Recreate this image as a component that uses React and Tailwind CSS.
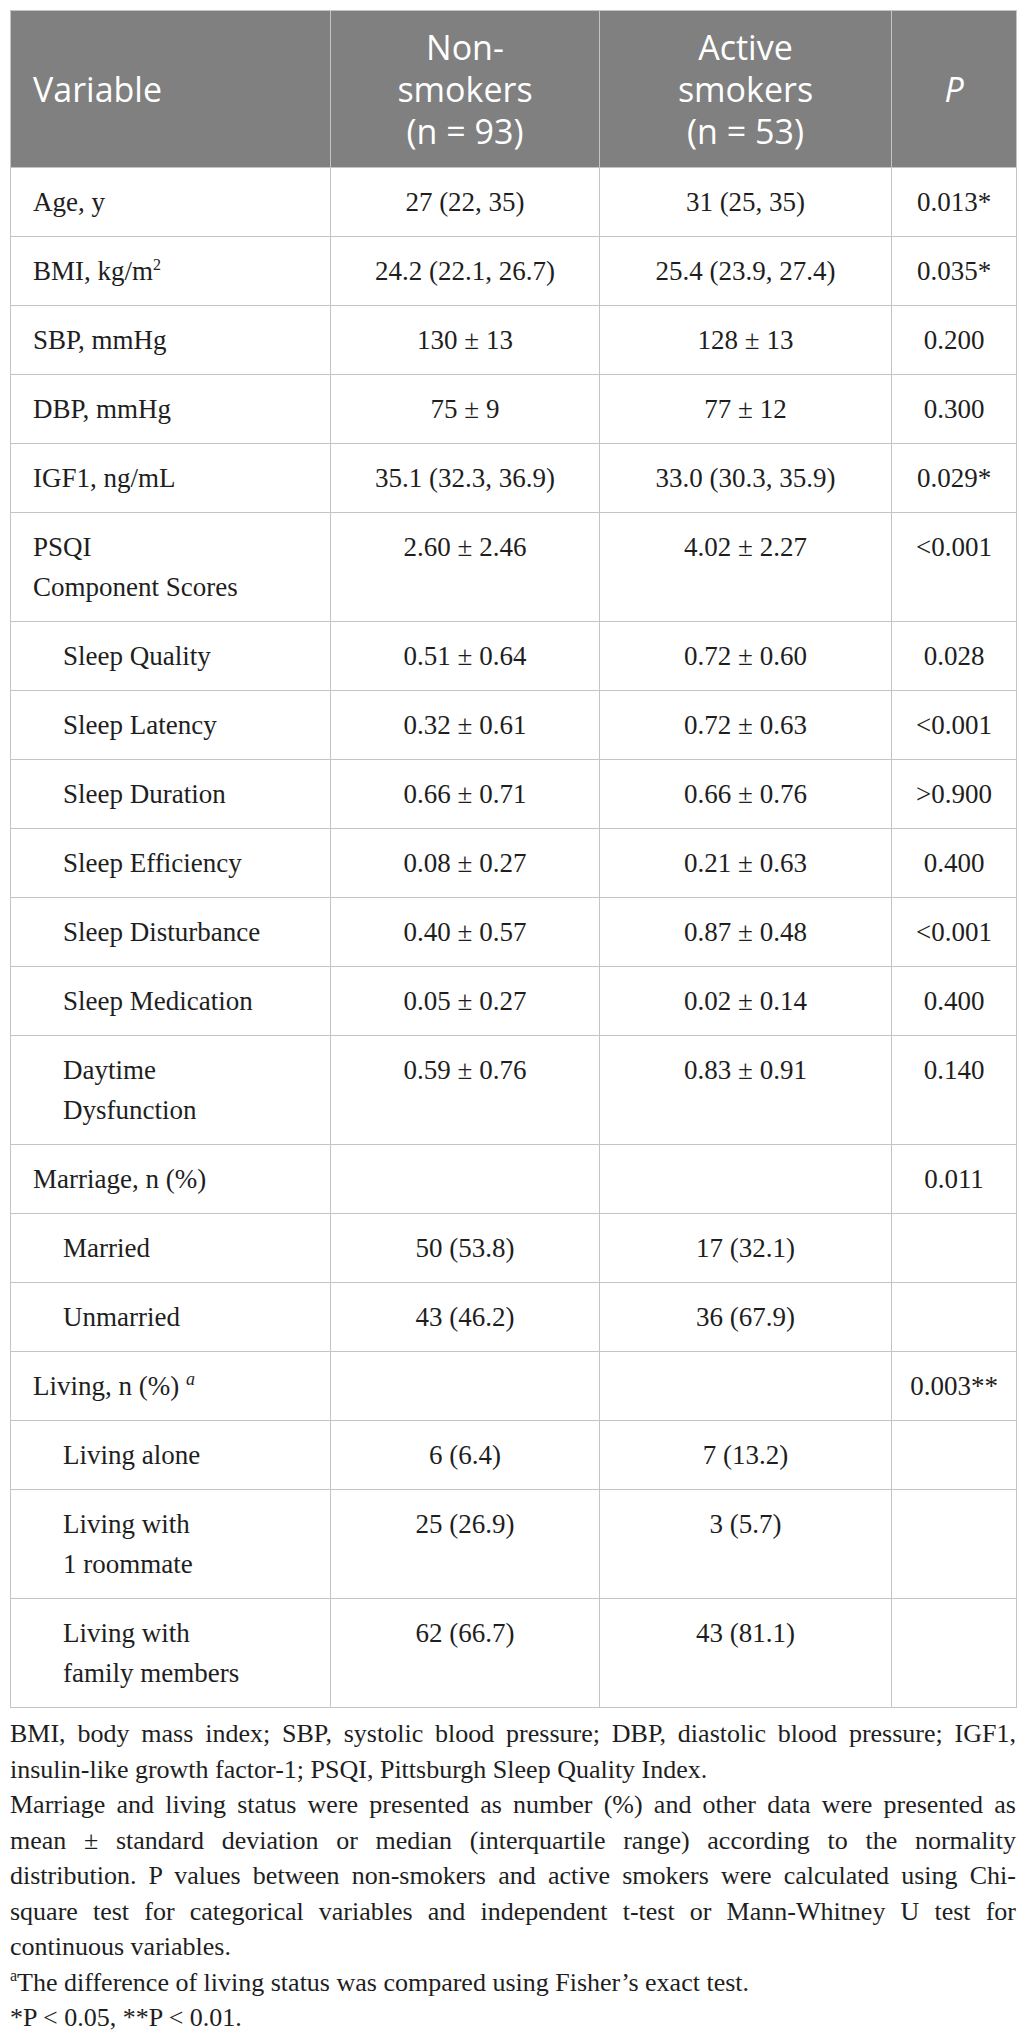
import React from "react";

const serif = { fontFamily: '"Liberation Serif", "Times New Roman", serif' };

const rows = [
  { label: "Age, y", a: "27 (22, 35)", b: "31 (25, 35)", p: "0.013*" },
  { label: (<>BMI, kg/m<sup className="text-[16px] relative -top-[10px]">2</sup></>), a: "24.2 (22.1, 26.7)", b: "25.4 (23.9, 27.4)", p: "0.035*" },
  { label: "SBP, mmHg", a: "130 ± 13", b: "128 ± 13", p: "0.200" },
  { label: "DBP, mmHg", a: "75 ± 9", b: "77 ± 12", p: "0.300" },
  { label: "IGF1, ng/mL", a: "35.1 (32.3, 36.9)", b: "33.0 (30.3, 35.9)", p: "0.029*" },
  { label: (<>PSQI<br />Component Scores</>), a: "2.60 ± 2.46", b: "4.02 ± 2.27", p: "<0.001" },
  { label: "Sleep Quality", indent: true, a: "0.51 ± 0.64", b: "0.72 ± 0.60", p: "0.028" },
  { label: "Sleep Latency", indent: true, a: "0.32 ± 0.61", b: "0.72 ± 0.63", p: "<0.001" },
  { label: "Sleep Duration", indent: true, a: "0.66 ± 0.71", b: "0.66 ± 0.76", p: ">0.900" },
  { label: "Sleep Efficiency", indent: true, a: "0.08 ± 0.27", b: "0.21 ± 0.63", p: "0.400" },
  { label: "Sleep Disturbance", indent: true, a: "0.40 ± 0.57", b: "0.87 ± 0.48", p: "<0.001" },
  { label: "Sleep Medication", indent: true, a: "0.05 ± 0.27", b: "0.02 ± 0.14", p: "0.400" },
  { label: (<>Daytime<br />Dysfunction</>), indent: true, a: "0.59 ± 0.76", b: "0.83 ± 0.91", p: "0.140" },
  { label: "Marriage, n (%)", a: "", b: "", p: "0.011" },
  { label: "Married", indent: true, a: "50 (53.8)", b: "17 (32.1)", p: "" },
  { label: "Unmarried", indent: true, a: "43 (46.2)", b: "36 (67.9)", p: "" },
  { label: (<>Living, n (%) <sup className="italic text-[18px] relative -top-[10px]">a</sup></>), a: "", b: "", p: "0.003**" },
  { label: "Living alone", indent: true, a: "6 (6.4)", b: "7 (13.2)", p: "" },
  { label: (<>Living with<br />1 roommate</>), indent: true, a: "25 (26.9)", b: "3 (5.7)", p: "" },
  { label: (<>Living with<br />family members</>), indent: true, a: "62 (66.7)", b: "43 (81.1)", p: "" },
];

const notes = [
  { t: "BMI, body mass index; SBP, systolic blood pressure; DBP, diastolic blood pressure; IGF1,", j: true },
  { t: "insulin-like growth factor-1; PSQI, Pittsburgh Sleep Quality Index.", j: false },
  { t: "Marriage and living status were presented as number (%) and other data were presented as", j: true },
  { t: "mean ± standard deviation or median (interquartile range) according to the normality", j: true },
  { t: "distribution. P values between non-smokers and active smokers were calculated using Chi-", j: true },
  { t: "square test for categorical variables and independent t-test or Mann-Whitney U test for", j: true },
  { t: "continuous variables.", j: false },
];

export default function App() {
  const th = "border border-[#c4c4c4] px-[22px] py-[15px] align-middle font-normal";
  const td = "border border-[#c4c4c4] py-[14px] align-top";
  return (
    <div className="w-[1026px] bg-white px-[10px] pt-[10px] pb-[10px] text-[#1e1e1e]">
      <table className="w-[1006px] table-fixed border-collapse" style={serif}>
        <colgroup>
          <col className="w-[320px]" />
          <col className="w-[269px]" />
          <col className="w-[292px]" />
          <col className="w-[125px]" />
        </colgroup>
        <thead>
          <tr className="bg-[#808080] text-white text-[34px] leading-[42px]" style={{ fontFamily: '"Open Sans", "Noto Sans", sans-serif' }}>
            <th className={th + " text-left"}>Variable</th>
            <th className={th + " text-center"}>Non-<br />smokers<br />(n = 93)</th>
            <th className={th + " text-center"}>Active<br />smokers<br />(n = 53)</th>
            <th className={th + " text-center italic"}>P</th>
          </tr>
        </thead>
        <tbody className="text-[27px] leading-[40px]">
          {rows.map((r, i) => (
            <tr key={i}>
              <td className={td + (r.indent ? " pl-[52px] pr-[10px]" : " pl-[22px] pr-[10px]") + " text-left"}>{r.label}</td>
              <td className={td + " px-[10px] text-center"}>{r.a}</td>
              <td className={td + " px-[10px] text-center"}>{r.b}</td>
              <td className={td + " px-[4px] text-center"}>{r.p}</td>
            </tr>
          ))}
        </tbody>
      </table>
      <div className="mt-[8px] text-[26px] leading-[35.5px]" style={serif}>
        {notes.map((n, i) => (
          <div key={i} className={n.j ? "whitespace-nowrap text-justify [text-align-last:justify]" : "whitespace-nowrap text-left"}>{n.t}</div>
        ))}
        <div><sup className="text-[16px] relative -top-[10px]">a</sup>The difference of living status was compared using Fisher’s exact test.</div>
        <div>*P &lt; 0.05, **P &lt; 0.01.</div>
      </div>
    </div>
  );
}
